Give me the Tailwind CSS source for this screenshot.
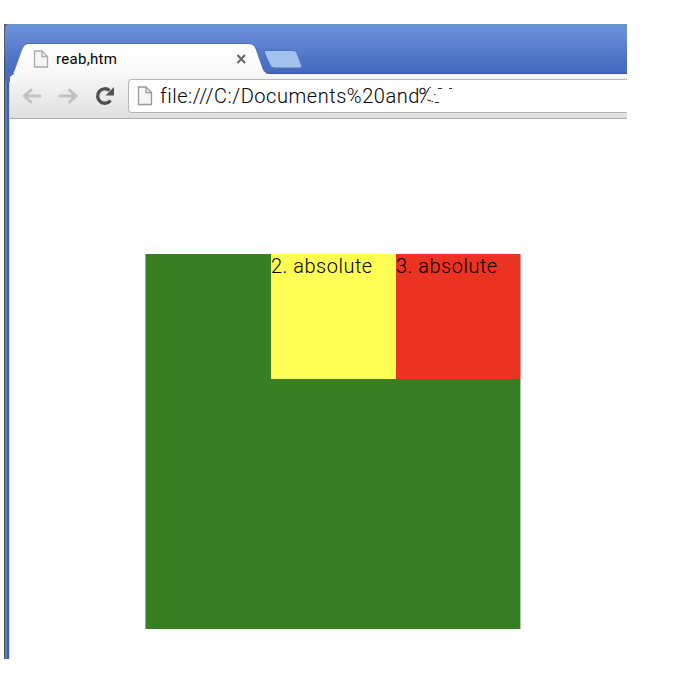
<!DOCTYPE html>
<html lang="en">
<head>
<meta charset="utf-8">
<title>reab.htm</title>
<script src="https://cdn.jsdelivr.net/npm/@tailwindcss/browser@4"></script>
</head>
<body class="bg-white overflow-hidden font-[Roboto,'Liberation_Sans',sans-serif] text-black">
<main class="relative ml-1 mt-6 w-[623px] h-[635px] flex overflow-hidden bg-white">
  <div class="w-px bg-[#494d54]"></div>
  <div class="w-[2px] bg-[#5b7dbd]"></div>
  <div class="w-[2px] bg-[#3f60ac]"></div>
  <div class="w-px bg-[#d5d7e3]"></div>
  <div class="flex-1 flex flex-col">
    <header class="relative h-[50px] shrink-0">
      <svg class="absolute -left-[6px] top-0" width="623" height="58" viewBox="4 24 623 58">
        <defs>
          <linearGradient id="bar" x1="0" y1="0" x2="0" y2="1"><stop offset="0" stop-color="#6b94dc"/><stop offset=".25" stop-color="#6488d4"/><stop offset=".8" stop-color="#4b70c4"/><stop offset="1" stop-color="#466abd"/></linearGradient>
          <linearGradient id="tab" x1="0" y1="0" x2="0" y2="1"><stop offset="0" stop-color="#fff"/><stop offset="1" stop-color="#f6f6f6"/></linearGradient>
        </defs>
        <rect x="5" y="24" width="622" height="50" fill="url(#bar)"/>
        <path d="M5 24H627V25H5z" fill="#7191cd"/>
        <path d="M265 72.500H627V74H265z" fill="#3c5ca9"/>
        <path d="M5 74H16L10 76V82H5z" fill="#4a6dbd"/>
        <path d="M10 82V76Q13 74 14.500 70L22 49Q24 44 28 44H249Q254 44 256 49L263 69Q265 74 270 74V82z" fill="url(#tab)"/>
        <path d="M9.500 76Q13 74 14.500 70L22 49Q24 43.500 28 43.500H249Q254 43.500 256 49L263 69Q265 74 270 74" fill="none" stroke="#4264ae" stroke-opacity=".65"/>
        <path d="M4 24H8Q5 25 5 29V58H4z" fill="#555b65"/>
        <path d="M267 50.500H293Q296 50.500 297 53L301.500 65Q302.500 68 299 68H275Q271 68 270 65L264.500 53Q263.500 50.500 267 50.500z" fill="#a3c1ee" stroke="#4c70b9"/>
        <path d="M34.500 51H42L47.500 56.500V67H34.500zM42 51V56.500H47.500" fill="#f5f5f5" stroke="#aaa" stroke-width="1.300"/>
        <path d="M237.500 55L245 63M245 55L237.500 63" stroke="#666" stroke-width="2"/>
      </svg>
      <div class="relative pl-[46px] pt-[25px] text-[15px] leading-[20px] whitespace-pre tracking-[0.3px]">reab,htm</div>
    </header>
    <nav class="relative h-[45px] shrink-0 flex border-b border-[#ababab] bg-linear-to-b from-[#f7f7f7] to-[#e0e0e0]">
      <svg class="absolute -left-[6px] -top-px" width="16" height="9" viewBox="4 73 16 9"><path d="M5 73H15L10 77V81H5z" fill="#4a6dbd"/><path d="M10 82V77.500Q12 76 14.500 73H20V82z" fill="#f7f7f7"/></svg>
      <svg class="relative shrink-0" width="118" height="44" viewBox="10 74 118 44" fill="none">
        <path d="M40 96H25M31 90L24.500 96L31 102" stroke="#c1c1c1" stroke-width="3" stroke-linecap="round"/>
        <path d="M60 96H75M69.500 90L76 96L69.500 102" stroke="#c1c1c1" stroke-width="3" stroke-linecap="round"/>
        <path d="M110.500 100.500A7.200 7.200 0 1 1 109.500 90.500" stroke="#515151" stroke-width="3.400"/>
        <path d="M114 87V95.500H105.500z" fill="#515151"/>
      </svg>
      <div class="mt-[5px] h-[34px] flex-1 flex rounded-l-[4px] border border-r-0 border-[#b5b5b5] bg-white overflow-hidden">
        <svg class="shrink-0" width="31" height="32" viewBox="129 80 31 32"><path d="M138.500 87H146L151.500 92.500V104.500H138.500zM146 87V92.500H151.500" fill="#f5f5f5" stroke="#999" stroke-width="1.300"/></svg>
        <div class="w-[259px] shrink-0 whitespace-pre text-[20px] leading-[32px] font-light tracking-[0.54px]">file:///C:/Documents%20and</div>
        <svg class="shrink-0" width="40" height="32" viewBox="419 80 40 32" fill="none" stroke="#333" stroke-width="1.200"><circle cx="422.500" cy="91" r="2.600"/><path d="M421 103L429 88M427.500 99.500Q429 101.500 431 100.500M429.500 87.500H431M434 94.500H435.500M431.500 101.500H433M435 102.500H439M438 88.500H442M449 88.500H452"/></svg>
      </div>
    </nav>
    <section class="h-[540px] pl-[135px] pt-[135px] text-[20px] leading-[24px] font-light tracking-[0.5px]">
      <div class="w-[376px] h-[375px] border-x border-l-[#87b17a] border-r-[#a8c79f] bg-[#387e22] grid grid-cols-[125px_125px_125px]">
        <div></div>
        <div class="relative h-[125px] bg-[#ffff54] whitespace-pre">2. absolute</div>
        <div class="relative h-[125px] bg-[#eb3324] border-r border-[#f4988f] whitespace-pre">3. absolute</div>
      </div>
    </section>
  </div>
</main>
</body>
</html>
